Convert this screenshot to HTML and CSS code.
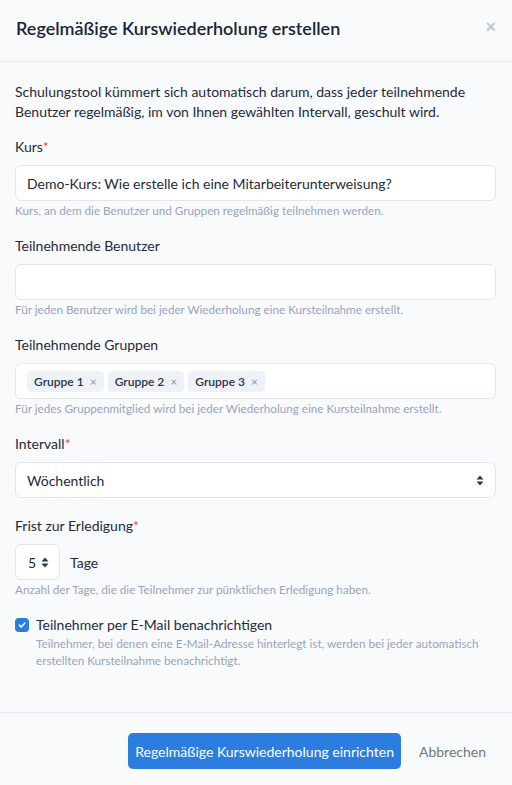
FILE: index.html
```html
<!DOCTYPE html>
<html lang="de">
<head>
    <meta charset="UTF-8">
    <meta name="viewport" content="width=device-width, initial-scale=1.0">
    <title>Regelmäßige Kurswiederholung erstellen</title>
    <link rel="stylesheet" href="styles.css">
</head>
<body>
    <div class="modal">
        <div class="modal-header">
            <h2>Regelmäßige Kurswiederholung erstellen</h2>
            <button class="close" type="button">&times;</button>
        </div>

        <div class="modal-body">
            <p class="intro">Schulungstool kümmert sich automatisch darum, dass jeder teilnehmende Benutzer regelmäßig, im von Ihnen gewählten Intervall, geschult wird.</p>

            <div class="form-group">
                <label>Kurs<span class="req">*</span></label>
                <div class="field">Demo-Kurs: Wie erstelle ich eine Mitarbeiterunterweisung?</div>
                <small>Kurs, an dem die Benutzer und Gruppen regelmäßig teilnehmen werden.</small>
            </div>

            <div class="form-group">
                <label>Teilnehmende Benutzer</label>
                <div class="field"></div>
                <small>Für jeden Benutzer wird bei jeder Wiederholung eine Kursteilnahme erstellt.</small>
            </div>

            <div class="form-group">
                <label>Teilnehmende Gruppen</label>
                <div class="field tags">
                    <span class="tag">Gruppe 1 <i>&times;</i></span>
                    <span class="tag">Gruppe 2 <i>&times;</i></span>
                    <span class="tag">Gruppe 3 <i>&times;</i></span>
                </div>
                <small>Für jedes Gruppenmitglied wird bei jeder Wiederholung eine Kursteilnahme erstellt.</small>
            </div>

            <div class="form-group">
                <label>Intervall<span class="req">*</span></label>
                <div class="field select">
                    <span>Wöchentlich</span>
                    <svg class="updown" width="8" height="11" viewBox="0 0 8 11"><path d="M4 0.5 L7.5 4.5 H0.5 Z M4 10.5 L7.5 6.5 H0.5 Z" fill="#2d3748"/></svg>
                </div>
            </div>

            <div class="form-group">
                <label>Frist zur Erledigung<span class="req">*</span></label>
                <div class="inline">
                    <div class="field select number">
                        <span>5</span>
                        <svg class="updown" width="8" height="11" viewBox="0 0 8 11"><path d="M4 0.5 L7.5 4.5 H0.5 Z M4 10.5 L7.5 6.5 H0.5 Z" fill="#2d3748"/></svg>
                    </div>
                    <span class="unit">Tage</span>
                </div>
                <small>Anzahl der Tage, die die Teilnehmer zur pünktlichen Erledigung haben.</small>
            </div>

            <div class="check">
                <span class="box">
                    <svg width="10" height="10" viewBox="0 0 10 10"><path d="M2.3 5.2 L4.2 7 L7.7 3.2" fill="none" stroke="#fff" stroke-width="1.6" stroke-linecap="round" stroke-linejoin="round"/></svg>
                </span>
                <div>
                    <div class="check-label">Teilnehmer per E-Mail benachrichtigen</div>
                    <small>Teilnehmer, bei denen eine E-Mail-Adresse hinterlegt ist, werden bei jeder automatisch erstellten Kursteilnahme benachrichtigt.</small>
                </div>
            </div>
        </div>

        <div class="modal-footer">
            <button class="btn btn-primary" type="button">Regelmäßige Kurswiederholung einrichten</button>
            <button class="btn btn-link" type="button">Abbrechen</button>
        </div>
    </div>
</body>
</html>
```

FILE: styles.css
```css
body {
    margin: 0;
    font-family: Lato, "Open Sans", sans-serif;
    background-color: #f8fafc;
    color: #1f2a3c;
}
.modal {
    width: 512px;
    min-height: 785px;
    display: flex;
    flex-direction: column;
}
.modal-header {
    height: 62px;
    box-sizing: border-box;
    display: flex;
    align-items: center;
    justify-content: space-between;
    padding: 0 16px 6px 16px;
    border-bottom: 1px solid #e9edf2;
}
.modal-header h2 {
    margin: 0;
    font-size: 18px;
    font-weight: 600;
    color: #1a2538;
}
.close {
    border: none;
    background: none;
    color: #c3c8d2;
    font-size: 18px;
    font-weight: bold;
    padding: 0;
    cursor: pointer;
}
.modal-body {
    flex: 1;
    padding: 20px 16px 0 15px;
}
.intro {
    margin: 0 0 15px 0;
    font-size: 14px;
    line-height: 20px;
}
.form-group {
    display: flex;
    flex-direction: column;
    margin-bottom: 18px;
}
label {
    font-size: 14px;
    line-height: 20px;
    margin-bottom: 8px;
}
.req {
    color: #e5533d;
}
.field {
    height: 36px;
    box-sizing: border-box;
    background-color: white;
    border: 1px solid #e2e7ee;
    border-radius: 6px;
    padding: 0 11px;
    display: flex;
    align-items: center;
    font-size: 14px;
}
.tags {
    gap: 4px;
}
.tag {
    background-color: #eef2f8;
    border-radius: 4px;
    padding: 3px 7px;
    font-size: 12px;
    font-weight: 600;
    color: #2a3446;
}
.tag i {
    font-style: normal;
    color: #8b95b0;
    font-weight: normal;
    margin-left: 3px;
}
.select {
    justify-content: space-between;
}
.inline {
    display: flex;
    align-items: center;
    gap: 10px;
}
.number {
    width: 45px;
    padding: 0 10px 0 12px;
}
.unit {
    font-size: 14px;
}
small {
    font-size: 11.7px;
    line-height: 16px;
    margin-top: 1px;
    color: #98a3bf;
}
.check {
    display: flex;
    gap: 7px;
    margin-top: 3px;
}
.box {
    width: 14px;
    height: 14px;
    margin-top: 3px;
    flex-shrink: 0;
    border-radius: 4px;
    background-color: #2b7de0;
    display: flex;
    align-items: center;
    justify-content: center;
}
.check-label {
    font-size: 14px;
    line-height: 20px;
}
.check small {
    display: block;
    line-height: 17px;
    margin-top: 0;
}
.modal-footer {
    height: 73px;
    box-sizing: border-box;
    border-top: 1px solid #e9edf2;
    display: flex;
    align-items: center;
    justify-content: flex-end;
    padding: 4px 26px 0 0;
    gap: 18px;
}
.btn {
    font-family: inherit;
    font-size: 14px;
    border: none;
    cursor: pointer;
}
.btn-primary {
    background-color: #2b7de0;
    color: white;
    height: 36px;
    padding: 0 7px;
    border-radius: 5px;
}
.btn-link {
    background: none;
    color: #6f7786;
    padding: 0;
}
```
